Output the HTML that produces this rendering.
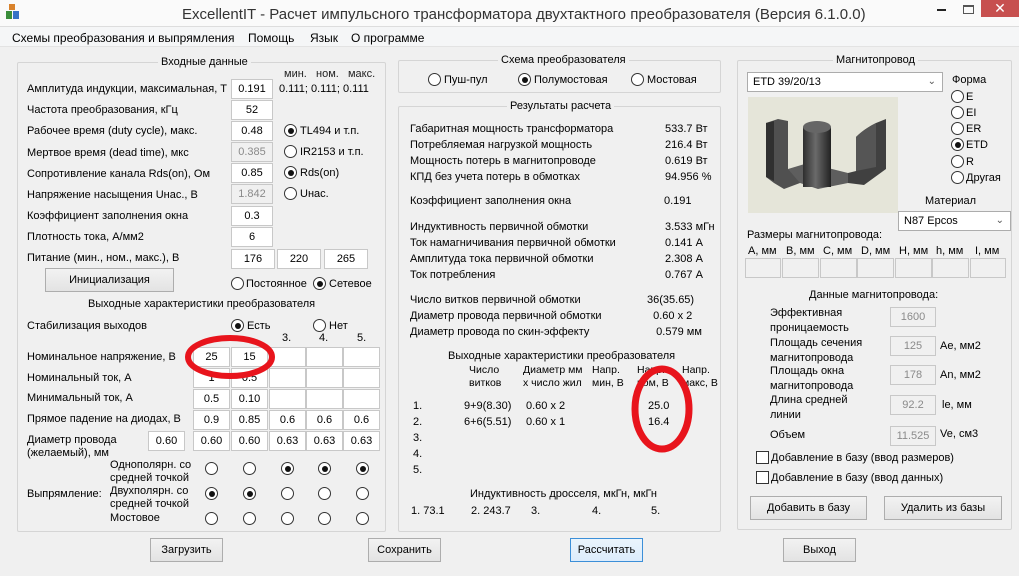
<!DOCTYPE html><html><head><meta charset="utf-8"><style>
*{margin:0;padding:0;box-sizing:border-box}
body{width:1019px;height:576px;background:#f0f0f0;font-family:"Liberation Sans","DejaVu Sans",sans-serif;font-size:11px;color:#000;position:relative;overflow:hidden}
div,span{position:absolute;white-space:nowrap}
.t{line-height:14px}
.i{background:#fff;border:1px solid #c8c8c8;height:20px;line-height:18px;text-align:center}
.g{background:#f0f0f0;color:#8a8a8a;border:1px solid #c8c8c8;height:20px;line-height:18px;text-align:center}
.r{width:13px;height:13px;border:1px solid #333;border-radius:50%;background:#fff}
.r.on:after{content:"";position:absolute;left:2.5px;top:2.5px;width:6px;height:6px;border-radius:50%;background:#111}
.gb{border:1px solid #d5d5d5;border-radius:2px}
.gt{background:#f0f0f0;padding:0 3px;line-height:14px}
.b{border:1px solid #adadad;background:linear-gradient(#f2f2f2,#e3e3e3);text-align:center;line-height:22px;height:24px}
.cb{width:13px;height:13px;border:1px solid #333;background:#fff}
</style></head><body>
<div style="left:0;top:0;width:1019px;height:27px;background:#fafafa;border-bottom:1px solid #ddd"></div>
<div style="left:6px;top:4px;width:13px;height:16px">
<div style="left:3px;top:0;width:6px;height:6px;background:#d9822b"></div>
<div style="left:0;top:7px;width:6px;height:8px;background:#3a8d3a"></div>
<div style="left:7px;top:7px;width:6px;height:8px;background:#3572c6"></div></div>
<div class="t" style="left:182px;top:6px;font-size:15px;line-height:18px;color:#333">ExcellentIT - Расчет импульсного трансформатора двухтактного преобразователя (Версия 6.1.0.0)</div>
<div style="left:937px;top:9px;width:9px;height:2px;background:#222"></div>
<div style="left:963px;top:5px;width:11px;height:9px;border:1px solid #555;border-top-width:2px"></div>
<div style="left:981px;top:0;width:38px;height:17px;background:#c7504f;color:#fff;text-align:center;font-size:14px;line-height:16px">✕</div>
<div style="left:0;top:27px;width:1019px;height:20px;background:#f5f6f7;border-bottom:1px solid #e3e3e3"></div>
<div class="t" style="left:12px;top:31px;font-size:12px">Схемы преобразования и выпрямления</div>
<div class="t" style="left:248px;top:31px;font-size:12px">Помощь</div>
<div class="t" style="left:310px;top:31px;font-size:12px">Язык</div>
<div class="t" style="left:351px;top:31px;font-size:12px">О программе</div>

<!-- LEFT -->
<div class="gb" style="left:17px;top:62px;width:369px;height:470px"></div>
<div class="gt" style="left:158px;top:55px">Входные данные</div>
<div class="t" style="left:284px;top:67px;color:#222">мин.&nbsp;&nbsp; ном.&nbsp;&nbsp; макс.</div>
<div class="t" style="left:27px;top:82px">Амплитуда индукции, максимальная, Т</div><div class="i" style="left:231px;top:79px;width:42px">0.191</div><div class="t" style="left:279px;top:82px">0.111; 0.111; 0.111</div>
<div class="t" style="left:27px;top:103px">Частота преобразования, кГц</div><div class="i" style="left:231px;top:100px;width:42px">52</div>
<div class="t" style="left:27px;top:124px">Рабочее время (duty cycle), макс.</div><div class="i" style="left:231px;top:121px;width:42px">0.48</div><div class="r on" style="left:284px;top:124px"></div><div class="t" style="left:300px;top:124px">TL494 и т.п.</div>
<div class="t" style="left:27px;top:146px">Мертвое время (dead time), мкс</div><div class="g" style="left:231px;top:142px;width:42px">0.385</div><div class="r" style="left:284px;top:145px"></div><div class="t" style="left:300px;top:145px">IR2153 и т.п.</div>
<div class="t" style="left:27px;top:167px">Сопротивление канала Rds(on), Ом</div><div class="i" style="left:231px;top:163px;width:42px">0.85</div><div class="r on" style="left:284px;top:166px"></div><div class="t" style="left:300px;top:166px">Rds(on)</div>
<div class="t" style="left:27px;top:188px">Напряжение насыщения Uнас., В</div><div class="g" style="left:231px;top:184px;width:42px">1.842</div><div class="r" style="left:284px;top:187px"></div><div class="t" style="left:300px;top:187px">Uнас.</div>
<div class="t" style="left:27px;top:209px">Коэффициент заполнения окна</div><div class="i" style="left:231px;top:206px;width:42px">0.3</div>
<div class="t" style="left:27px;top:230px">Плотность тока, А/мм2</div><div class="i" style="left:231px;top:227px;width:42px">6</div>
<div class="t" style="left:27px;top:251px">Питание (мин., ном., макс.), В</div><div class="i" style="left:231px;top:249px;width:44px">176</div><div class="i" style="left:277px;top:249px;width:44px">220</div><div class="i" style="left:324px;top:249px;width:44px">265</div>
<div class="b" style="left:45px;top:268px;width:129px">Инициализация</div>
<div class="r" style="left:231px;top:277px"></div><div class="t" style="left:246px;top:277px">Постоянное</div><div class="r on" style="left:313px;top:277px"></div><div class="t" style="left:329px;top:277px">Сетевое</div>
<div class="t" style="left:88px;top:297px">Выходные характеристики преобразователя</div>
<div class="t" style="left:27px;top:319px">Стабилизация выходов</div><div class="r on" style="left:231px;top:319px"></div><div class="t" style="left:247px;top:319px">Есть</div><div class="r" style="left:313px;top:319px"></div><div class="t" style="left:329px;top:319px">Нет</div>
<div class="t" style="left:282px;top:331px">3.</div><div class="t" style="left:319px;top:331px">4.</div><div class="t" style="left:357px;top:331px">5.</div>
<div class="t" style="left:27px;top:350px">Номинальное напряжение, В</div>
<div class="t" style="left:27px;top:371px">Номинальный ток, А</div>
<div class="t" style="left:27px;top:391px">Минимальный ток, А</div>
<div class="t" style="left:27px;top:412px">Прямое падение на диодах, В</div>
<div class="t" style="left:27px;top:434px;line-height:13px">Диаметр провода<br>(желаемый), мм</div>
<div class="i" style="left:148px;top:431px;width:37px">0.60</div>
<div class="i" style="left:193px;top:347px;width:37px">25</div><div class="i" style="left:231px;top:347px;width:37px">15</div><div class="i" style="left:269px;top:347px;width:37px"></div><div class="i" style="left:306px;top:347px;width:37px"></div><div class="i" style="left:343px;top:347px;width:37px"></div>
<div class="i" style="left:193px;top:368px;width:37px">1</div><div class="i" style="left:231px;top:368px;width:37px">0.5</div><div class="i" style="left:269px;top:368px;width:37px"></div><div class="i" style="left:306px;top:368px;width:37px"></div><div class="i" style="left:343px;top:368px;width:37px"></div>
<div class="i" style="left:193px;top:389px;width:37px">0.5</div><div class="i" style="left:231px;top:389px;width:37px">0.10</div><div class="i" style="left:269px;top:389px;width:37px"></div><div class="i" style="left:306px;top:389px;width:37px"></div><div class="i" style="left:343px;top:389px;width:37px"></div>
<div class="i" style="left:193px;top:410px;width:37px">0.9</div><div class="i" style="left:231px;top:410px;width:37px">0.85</div><div class="i" style="left:269px;top:410px;width:37px">0.6</div><div class="i" style="left:306px;top:410px;width:37px">0.6</div><div class="i" style="left:343px;top:410px;width:37px">0.6</div>
<div class="i" style="left:193px;top:431px;width:37px">0.60</div><div class="i" style="left:231px;top:431px;width:37px">0.60</div><div class="i" style="left:269px;top:431px;width:37px">0.63</div><div class="i" style="left:306px;top:431px;width:37px">0.63</div><div class="i" style="left:343px;top:431px;width:37px">0.63</div>
<div class="t" style="left:110px;top:459px;line-height:13px">Однополярн. со<br>средней точкой</div>
<div class="t" style="left:110px;top:485px;line-height:13px">Двухполярн. со<br>средней точкой</div>
<div class="t" style="left:110px;top:511px">Мостовое</div>
<div class="t" style="left:27px;top:487px">Выпрямление:</div>
<div class="r" style="left:205px;top:462px"></div><div class="r" style="left:243px;top:462px"></div><div class="r on" style="left:281px;top:462px"></div><div class="r on" style="left:318px;top:462px"></div><div class="r on" style="left:356px;top:462px"></div>
<div class="r on" style="left:205px;top:487px"></div><div class="r on" style="left:243px;top:487px"></div><div class="r" style="left:281px;top:487px"></div><div class="r" style="left:318px;top:487px"></div><div class="r" style="left:356px;top:487px"></div>
<div class="r" style="left:205px;top:512px"></div><div class="r" style="left:243px;top:512px"></div><div class="r" style="left:281px;top:512px"></div><div class="r" style="left:318px;top:512px"></div><div class="r" style="left:356px;top:512px"></div>

<!-- MIDDLE -->
<div class="gb" style="left:398px;top:60px;width:323px;height:33px"></div>
<div class="gt" style="left:498px;top:53px">Схема преобразователя</div>
<div class="r" style="left:428px;top:73px"></div><div class="t" style="left:444px;top:73px">Пуш-пул</div>
<div class="r on" style="left:518px;top:73px"></div><div class="t" style="left:534px;top:73px">Полумостовая</div>
<div class="r" style="left:631px;top:73px"></div><div class="t" style="left:647px;top:73px">Мостовая</div>
<div class="gb" style="left:398px;top:106px;width:323px;height:426px"></div>
<div class="gt" style="left:507px;top:99px">Результаты расчета</div>
<div class="t" style="left:410px;top:121px;line-height:16px">Габаритная мощность трансформатора<br>Потребляемая нагрузкой мощность<br>Мощность потерь в магнитопроводе<br>КПД без учета потерь в обмотках</div>
<div class="t" style="left:665px;top:121px;line-height:16px">533.7 Вт<br>216.4 Вт<br>0.619 Вт<br>94.956 %</div>
<div class="t" style="left:410px;top:194px">Коэффициент заполнения окна</div><div class="t" style="left:664px;top:194px">0.191</div>
<div class="t" style="left:410px;top:219px;line-height:16px">Индуктивность первичной обмотки<br>Ток намагничивания первичной обмотки<br>Амплитуда тока первичной обмотки<br>Ток потребления</div>
<div class="t" style="left:665px;top:219px;line-height:16px">3.533 мГн<br>0.141 А<br>2.308 А<br>0.767 А</div>
<div class="t" style="left:410px;top:292px;line-height:16px">Число витков первичной обмотки<br>Диаметр провода первичной обмотки<br>Диаметр провода по скин-эффекту</div>
<div class="t" style="left:647px;top:292px;line-height:16px">36(35.65)<br>&nbsp;&nbsp;0.60 x 2<br>&nbsp;&nbsp;&nbsp;0.579 мм</div>
<div class="t" style="left:448px;top:349px">Выходные характеристики преобразователя</div>
<div class="t" style="left:469px;top:364px;line-height:13px;font-size:10.5px">Число<br>витков</div>
<div class="t" style="left:523px;top:364px;line-height:13px;font-size:10.5px">Диаметр мм<br>х число жил</div>
<div class="t" style="left:592px;top:364px;line-height:13px;font-size:10.5px">Напр.<br>мин, В</div>
<div class="t" style="left:637px;top:364px;line-height:13px;font-size:10.5px">Напр.<br>ном, В</div>
<div class="t" style="left:682px;top:364px;line-height:13px;font-size:10.5px">Напр.<br>макс, В</div>
<div class="t" style="left:413px;top:398px;line-height:16px">1.<br>2.<br>3.<br>4.<br>5.</div>
<div class="t" style="left:464px;top:398px;line-height:16px">9+9(8.30)<br>6+6(5.51)</div>
<div class="t" style="left:526px;top:398px;line-height:16px">0.60 x 2<br>0.60 x 1</div>
<div class="t" style="left:648px;top:398px;line-height:16px">25.0<br>16.4</div>
<div class="t" style="left:470px;top:487px">Индуктивность дросселя, мкГн, мкГн</div>
<div class="t" style="left:411px;top:504px">1. 73.1</div><div class="t" style="left:471px;top:504px">2. 243.7</div><div class="t" style="left:531px;top:504px">3.</div><div class="t" style="left:592px;top:504px">4.</div><div class="t" style="left:651px;top:504px">5.</div>

<!-- RIGHT -->
<div class="gb" style="left:737px;top:60px;width:275px;height:470px"></div>
<div class="gt" style="left:833px;top:53px">Магнитопровод</div>
<div class="i" style="left:747px;top:72px;width:196px;text-align:left;padding-left:5px;border-color:#acacac">ETD 39/20/13<span style="right:6px;top:0;color:#555;font-size:10px">⌄</span></div>
<div style="left:748px;top:97px;width:150px;height:116px;background:#e5e5d9">
<svg width="150" height="116" viewBox="0 0 150 116">
<defs><linearGradient id="a" x1="0" x2="1"><stop offset="0" stop-color="#2e2e2e"/><stop offset=".45" stop-color="#6a6a6a"/><stop offset="1" stop-color="#222"/></linearGradient></defs>
<path d="M18 26 L30 22 L40 24 L40 72 L52 78 L52 86 L36 92 L26 86 L18 80 Z" fill="#505050"/>
<path d="M18 26 L26 24 L26 84 L18 80Z" fill="#303030"/>
<path d="M40 72 L60 66 L100 76 L100 86 L70 92 L52 86Z" fill="#5e5e5e"/>
<rect x="55" y="30" width="28" height="60" fill="url(#a)"/>
<ellipse cx="69" cy="30" rx="14" ry="6" fill="#666"/>
<path d="M128 26 L138 22 L138 72 L116 88 L100 86 L100 76 L108 74 L108 40 Q116 32 128 26Z" fill="#404040"/>
<path d="M108 40 Q116 32 128 26 L128 70 L108 74Z" fill="#555"/>
</svg></div>
<div class="t" style="left:952px;top:73px">Форма</div>
<div class="r" style="left:951px;top:90px"></div><div class="t" style="left:966px;top:90px">E</div>
<div class="r" style="left:951px;top:106px"></div><div class="t" style="left:966px;top:106px">EI</div>
<div class="r" style="left:951px;top:122px"></div><div class="t" style="left:966px;top:122px">ER</div>
<div class="r on" style="left:951px;top:138px"></div><div class="t" style="left:966px;top:138px">ETD</div>
<div class="r" style="left:951px;top:155px"></div><div class="t" style="left:966px;top:155px">R</div>
<div class="r" style="left:951px;top:171px"></div><div class="t" style="left:966px;top:171px">Другая</div>
<div class="t" style="left:925px;top:194px">Материал</div>
<div class="i" style="left:898px;top:211px;width:113px;text-align:left;padding-left:5px;border-color:#acacac">N87 Epcos<span style="right:6px;top:0;color:#555;font-size:10px">⌄</span></div>
<div class="t" style="left:747px;top:228px">Размеры магнитопровода:</div>
<div class="t" style="left:748px;top:244px">A, мм</div><div class="t" style="left:786px;top:244px">B, мм</div><div class="t" style="left:823px;top:244px">C, мм</div><div class="t" style="left:861px;top:244px">D, мм</div><div class="t" style="left:899px;top:244px">H, мм</div><div class="t" style="left:936px;top:244px">h, мм</div><div class="t" style="left:975px;top:244px">I, мм</div>
<div class="g" style="left:745px;top:258px;width:36px"></div><div class="g" style="left:782px;top:258px;width:37px"></div><div class="g" style="left:820px;top:258px;width:37px"></div><div class="g" style="left:857px;top:258px;width:37px"></div><div class="g" style="left:895px;top:258px;width:37px"></div><div class="g" style="left:932px;top:258px;width:37px"></div><div class="g" style="left:970px;top:258px;width:36px"></div>
<div class="t" style="left:809px;top:288px">Данные магнитопровода:</div>
<div class="t" style="left:770px;top:306px;line-height:15px">Эффективная<br>проницаемость</div><div class="g" style="left:890px;top:307px;width:46px">1600</div>
<div class="t" style="left:770px;top:336px;line-height:15px">Площадь сечения<br>магнитопровода</div><div class="g" style="left:890px;top:336px;width:46px">125</div><div class="t" style="left:940px;top:339px">Ae, мм2</div>
<div class="t" style="left:770px;top:364px;line-height:15px">Площадь окна<br>магнитопровода</div><div class="g" style="left:890px;top:365px;width:46px">178</div><div class="t" style="left:940px;top:368px">An, мм2</div>
<div class="t" style="left:770px;top:393px;line-height:15px">Длина средней<br>линии</div><div class="g" style="left:890px;top:395px;width:46px">92.2</div><div class="t" style="left:942px;top:398px">le, мм</div>
<div class="t" style="left:770px;top:428px">Объем</div><div class="g" style="left:890px;top:426px;width:46px">11.525</div><div class="t" style="left:940px;top:427px">Ve, см3</div>
<div class="cb" style="left:756px;top:451px"></div><div class="t" style="left:771px;top:451px">Добавление в базу (ввод размеров)</div>
<div class="cb" style="left:756px;top:471px"></div><div class="t" style="left:771px;top:471px">Добавление в базу (ввод данных)</div>
<div class="b" style="left:750px;top:496px;width:117px">Добавить в базу</div>
<div class="b" style="left:884px;top:496px;width:118px">Удалить из базы</div>

<!-- BOTTOM BUTTONS -->
<div class="b" style="left:150px;top:538px;width:73px">Загрузить</div>
<div class="b" style="left:368px;top:538px;width:73px">Сохранить</div>
<div class="b" style="left:570px;top:538px;width:73px;border-color:#3c8fd8;background:linear-gradient(#eaf4fc,#dcecfc)">Рассчитать</div>
<div class="b" style="left:783px;top:538px;width:73px">Выход</div>

<svg style="position:absolute;left:0;top:0" width="1019" height="576">
<ellipse cx="230" cy="357" rx="42" ry="19" fill="none" stroke="#e8141c" stroke-width="6"/>
<ellipse cx="662" cy="409" rx="27" ry="40" fill="none" stroke="#e8141c" stroke-width="7"/>
</svg>
</body></html>
